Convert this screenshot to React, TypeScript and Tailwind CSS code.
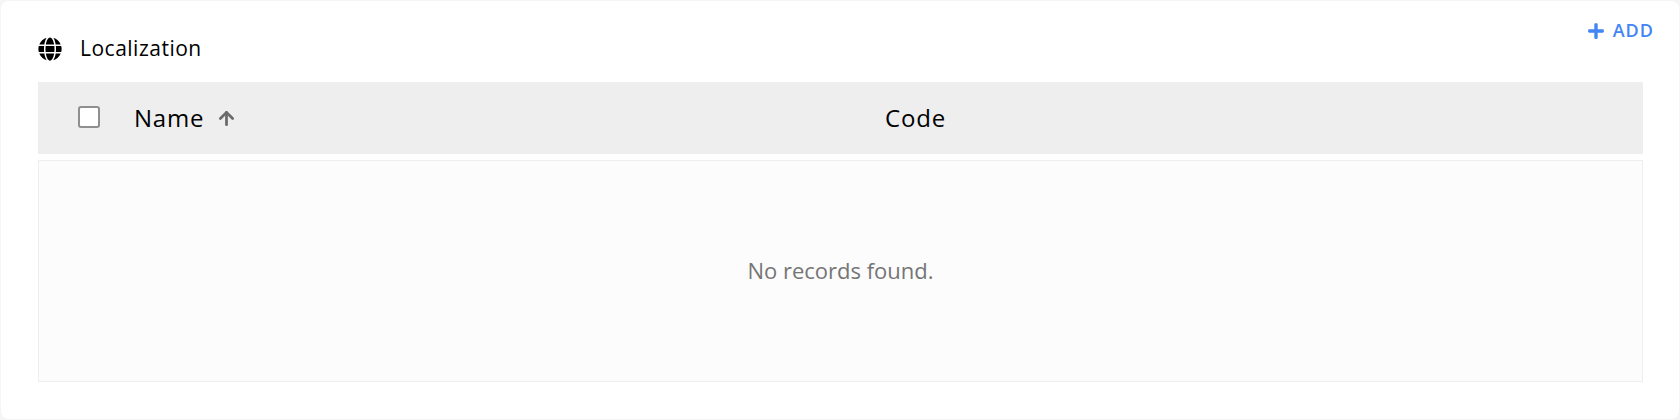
import { FaGlobe, FaPlus } from "react-icons/fa";
import { ArrowUp } from "lucide-react";

const App = () => {
  return (
    <div className="h-[420px] w-[1680px] bg-[#f5f5f5] p-px font-['Open_Sans',sans-serif]">
      <div className="flex h-full flex-col rounded-lg bg-white pl-[37px] pr-[36px]">
        <div className="flex h-[81px] justify-between">
          <div className="flex items-center gap-[18px] pt-[15px] text-[21px] font-medium tracking-[0.5px] text-black">
            <FaGlobe size={24} />
            <span>Localization</span>
          </div>
          <button
            type="button"
            className="-mr-[11px] flex h-[59px] items-center gap-[8px] text-[18px] font-semibold tracking-[1px] text-[#4285f4]"
          >
            <FaPlus size={18} /> ADD
          </button>
        </div>

        <div className="flex h-[72px] items-center bg-[#eeeeee] text-[24px] font-medium tracking-[0.8px] text-black">
          <span className="mb-[2px] ml-[40px] h-[22px] w-[22px] rounded-[3px] border-2 border-[#8f8f8f] bg-white" />
          <div className="ml-[34px] flex w-[751px] items-center gap-[12px]">
            <span>Name</span>
            <ArrowUp size={21} strokeWidth={3.2} className="text-[#6b6b6b]" />
          </div>
          <span>Code</span>
        </div>

        <div className="mt-[6px] flex h-[222px] items-center justify-center border border-[#eeeeee] bg-[#fcfcfc] pb-[2px] text-[22px] text-[#757575]">
          No records found.
        </div>
      </div>
    </div>
  );
};

export default App;
